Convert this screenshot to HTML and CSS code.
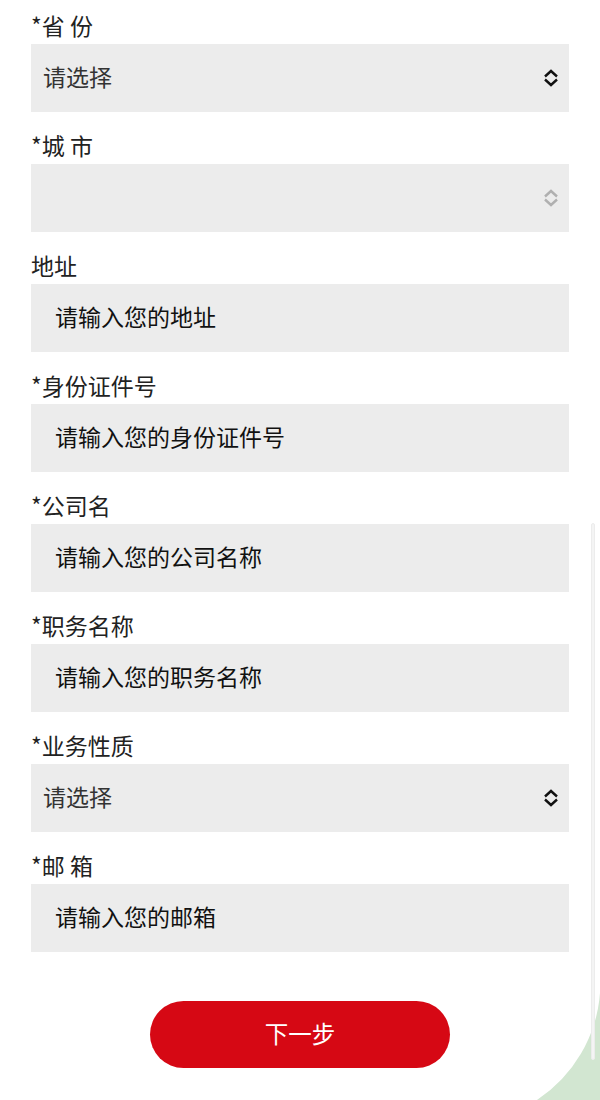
FILE: index.html
```html
<!DOCTYPE html>
<html lang="zh-CN">
<head>
  <meta charset="UTF-8" />
  <meta name="viewport" content="width=device-width, initial-scale=1" />
  <title>填写信息</title>
  <link rel="stylesheet" href="styles.css">
</head>
<body>
  <form class="info-form">
    <div class="field">
      <label>*省 份</label>
      <div class="select-wrap">
        <select class="box select">
          <option>请选择</option>
        </select>
        <svg class="chevron" viewBox="0 0 16 18"><path d="M2 7.5 L8 2 L14 7.5 M2 10.5 L8 16 L14 10.5" /></svg>
      </div>
    </div>

    <div class="field">
      <label>*城 市</label>
      <div class="select-wrap">
        <select class="box select" disabled>
          <option></option>
        </select>
        <svg class="chevron off" viewBox="0 0 16 18"><path d="M2 7.5 L8 2 L14 7.5 M2 10.5 L8 16 L14 10.5" /></svg>
      </div>
    </div>

    <div class="field">
      <label>地址</label>
      <input class="box" type="text" placeholder="请输入您的地址">
    </div>

    <div class="field">
      <label>*身份证件号</label>
      <input class="box" type="text" placeholder="请输入您的身份证件号">
    </div>

    <div class="field">
      <label>*公司名</label>
      <input class="box" type="text" placeholder="请输入您的公司名称">
    </div>

    <div class="field">
      <label>*职务名称</label>
      <input class="box" type="text" placeholder="请输入您的职务名称">
    </div>

    <div class="field">
      <label>*业务性质</label>
      <div class="select-wrap">
        <select class="box select">
          <option>请选择</option>
        </select>
        <svg class="chevron" viewBox="0 0 16 18"><path d="M2 7.5 L8 2 L14 7.5 M2 10.5 L8 16 L14 10.5" /></svg>
      </div>
    </div>

    <div class="field">
      <label>*邮 箱</label>
      <input class="box" type="email" placeholder="请输入您的邮箱">
    </div>

    <div class="actions">
      <button type="button" class="next-btn">下一步</button>
    </div>
  </form>

  <div class="scrollbar"></div>
  <svg class="corner-deco" viewBox="530 990 70 110">
    <path d="M600 993 A141.4 141.4 0 0 1 537 1100 L600 1100 Z" />
  </svg>
</body>
</html>
```

FILE: styles.css
```css
* { box-sizing: border-box; margin: 0; padding: 0; }
body {
  font-family: "Noto Sans CJK SC", "Noto Sans", sans-serif;
  background: #fff;
  color: #222;
  min-height: 1100px;
  overflow: hidden;
}

.info-form {
  padding: 0 31px 32px;
}

.field {
  display: flex;
  flex-direction: column;
  padding-bottom: 8px;
}
.field label {
  font-size: 23px;
  line-height: 34px;
  padding: 8px 0 2px;
  color: #222;
}

.box {
  display: block;
  width: 100%;
  height: 68px;
  border: none;
  outline: none;
  border-radius: 0;
  background: #ececec;
  font-family: inherit;
  font-size: 23px;
  color: #111;
  padding: 0 24px 4px;
}
.box::placeholder { color: #111; opacity: 1; }

.select-wrap { position: relative; }
.select {
  appearance: none;
  -webkit-appearance: none;
  padding: 0 40px 4px 12px;
  color: #333;
}
.select:disabled { opacity: 1; color: #333; }
.chevron {
  position: absolute;
  right: 10px;
  top: 25px;
  width: 16px;
  height: 18px;
  pointer-events: none;
}
.chevron path {
  fill: none;
  stroke: #111;
  stroke-width: 2.4;
  stroke-linejoin: miter;
}
.chevron.off path { stroke: #b0b0b0; }

.actions {
  display: flex;
  justify-content: center;
  padding-top: 41px;
}
.next-btn {
  width: 300px;
  height: 67px;
  border: none;
  border-radius: 34px;
  background: #d60814;
  color: #fff;
  font-family: inherit;
  font-size: 23.5px;
  padding-bottom: 4px;
  cursor: pointer;
}

/* overlay bits */
.corner-deco {
  position: fixed;
  right: 0;
  bottom: 0;
  width: 70px;
  height: 110px;
  z-index: 1;
}
.corner-deco path { fill: #d2e6d1; }

.scrollbar {
  position: fixed;
  right: 5px;
  top: 523px;
  width: 4px;
  height: 537px;
  border: 1px solid #ececec;
  background: #f4f4f4;
  border-radius: 2px;
  z-index: 2;
}
```
